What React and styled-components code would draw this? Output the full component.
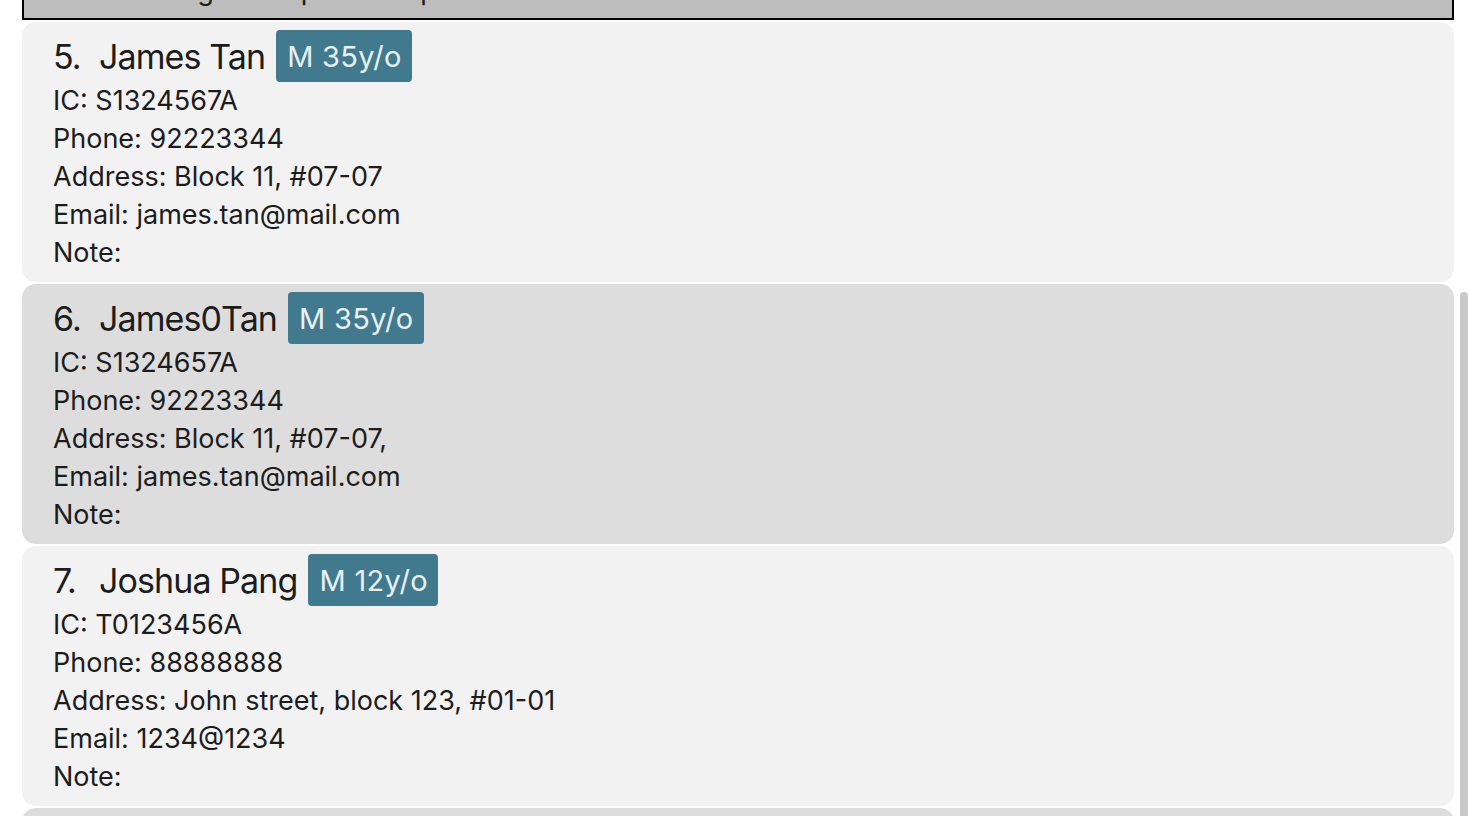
import React from "react";
import styled, { createGlobalStyle } from "styled-components";

const patients = [
  {
    id: 4,
    name: "Mary Lim",
    sex: "F",
    age: 60,
    ic: "S1234567B",
    phone: "91234567",
    address: "Block 20, #02-02",
    email: "mary.lim@mail.com",
    note: "Taking blood pressure pills",
  },
  {
    id: 5,
    name: "James Tan",
    sex: "M",
    age: 35,
    ic: "S1324567A",
    phone: "92223344",
    address: "Block 11, #07-07",
    email: "james.tan@mail.com",
    note: "",
  },
  {
    id: 6,
    name: "James0Tan",
    sex: "M",
    age: 35,
    ic: "S1324657A",
    phone: "92223344",
    address: "Block 11, #07-07,",
    email: "james.tan@mail.com",
    note: "",
  },
  {
    id: 7,
    name: "Joshua Pang",
    sex: "M",
    age: 12,
    ic: "T0123456A",
    phone: "88888888",
    address: "John street, block 123, #01-01",
    email: "1234@1234",
    note: "",
  },
  {
    id: 8,
    name: "Rachel Ong",
    sex: "F",
    age: 28,
    ic: "S9876543C",
    phone: "81112222",
    address: "Block 5, #03-10",
    email: "rachel@mail.com",
    note: "",
  },
];

export default function App() {
  return (
    <>
      <GlobalStyle />
      <Viewport>
        <List>
          {patients.map((p, i) => (
            <Card key={p.id} selected={i === 0} alt={i % 2 === 0}>
              <TitleRow>
                <Index>{`${p.id}.`}</Index>
                <Name>{p.name}</Name>
                <Badge>{`${p.sex} ${p.age}y/o`}</Badge>
              </TitleRow>
              <Detail>{`IC: ${p.ic}`}</Detail>
              <Detail>{`Phone: ${p.phone}`}</Detail>
              <Detail>{`Address: ${p.address}`}</Detail>
              <Detail>{`Email: ${p.email}`}</Detail>
              <Detail>{`Note: ${p.note}`}</Detail>
            </Card>
          ))}
        </List>
        <ScrollThumb />
      </Viewport>
    </>
  );
}

const GlobalStyle = createGlobalStyle`
  body {
    margin: 0;
    background: #ffffff;
    font-family: Inter, "Noto Sans", sans-serif;
  }
`;

const Viewport = styled.div`
  position: relative;
  height: 100vh;
  overflow: hidden;
  background: #ffffff;
`;

const List = styled.div`
  display: flex;
  flex-direction: column;
  gap: 2px;
  margin-top: -240px;
  padding: 0 14px 0 22px;
`;

const Card = styled.div`
  box-sizing: border-box;
  height: 260px;
  padding: 8px 0 10px 31px;
  border-radius: 14px;
  background: ${(p) => (p.selected ? "#bdbdbd" : p.alt ? "#dddddd" : "#f2f2f2")};
  border: ${(p) => (p.selected ? "2px solid #000000" : "none")};
  ${(p) => p.selected && "border-radius: 0; padding-left: 29px; padding-top: 6px;"}
  color: #1c1c1c;
  overflow: hidden;
`;

const TitleRow = styled.div`
  display: flex;
  align-items: center;
  height: 52px;
`;

const Index = styled.span`
  width: 46px;
  font-size: 34px;
  letter-spacing: -0.9px;
  color: #1c1c1c;
`;

const Name = styled.span`
  margin-right: 11px;
  font-size: 34px;
  letter-spacing: -0.9px;
  white-space: pre;
  color: #1c1c1c;
`;

const Badge = styled.span`
  display: flex;
  align-items: center;
  height: 52px;
  padding: 0 10px 0 11px;
  border-radius: 4px;
  background: #417a8f;
  color: #e9f0f2;
  font-size: 29px;
  letter-spacing: 0.3px;
`;

const Detail = styled.div`
  font-size: 27px;
  line-height: 38px;
  white-space: pre;
  color: #1c1c1c;
`;

const ScrollThumb = styled.div`
  position: absolute;
  right: 0;
  top: 292px;
  bottom: -10px;
  width: 8px;
  border-radius: 4px;
  background: #c9c9c9;
`;
